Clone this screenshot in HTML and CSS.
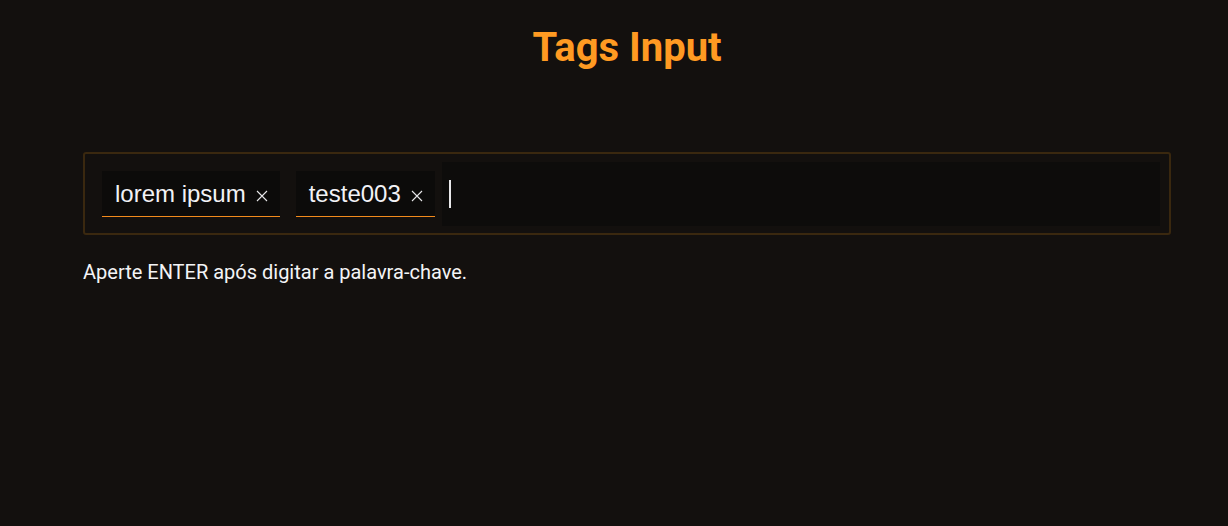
FILE: index.html
```html
<!DOCTYPE html>
<html lang="pt">
<head>
<meta charset="utf-8">
<title>Tags Input</title>
<link rel="stylesheet" href="styles.css">
</head>
<body>
<main class="wrap">
  <h1 class="title">Tags Input</h1>
  <div class="tags-box">
    <span class="tag">lorem ipsum<button class="tag-remove" aria-label="remover"><svg width="12" height="12" viewBox="0 0 12 12"><path d="M1 1L11 11M11 1L1 11" stroke="#e8e8ea" stroke-width="1.1" fill="none"/></svg></button></span>
    <span class="tag">teste003<button class="tag-remove" aria-label="remover"><svg width="12" height="12" viewBox="0 0 12 12"><path d="M1 1L11 11M11 1L1 11" stroke="#e8e8ea" stroke-width="1.1" fill="none"/></svg></button></span>
    <div class="tag-input"><span class="caret"></span></div>
  </div>
  <p class="hint">Aperte ENTER após digitar a palavra-chave.</p>
</main>
</body>
</html>
```
FILE: styles.css
```css
html, body {
  margin: 0;
  padding: 0;
  background: #13100e;
  height: 100%;
}
.wrap {
  width: 1088px;
  margin-left: 83px;
  padding-top: 24px;
  font-family: Roboto, "Liberation Sans", sans-serif;
}
.title {
  margin: 0 0 80px 0;
  text-align: center;
  font-family: Roboto, sans-serif;
  font-weight: 700;
  font-size: 40px;
  line-height: 48px;
  color: #ff9a22;
}
.tags-box {
  display: flex;
  align-items: center;
  border: 2px solid #3a280f;
  border-radius: 3px;
  padding: 8px 9px 7px 8px;
  height: 64px;
  box-sizing: content-box;
}
.tag {
  display: flex;
  align-items: center;
  box-sizing: border-box;
  height: 46px;
  margin-left: 9px;
  margin-right: 7px;
  padding: 0 12px 0 13px;
  background: #0c0b0a;
  border-bottom: 1px solid #f28a1c;
  font-family: "Liberation Sans", Arial, sans-serif;
  font-size: 24px;
  color: #f2f2f6;
}
.tag + .tag {
  margin-left: 9px;
}
.tag-remove {
  display: flex;
  align-items: center;
  background: none;
  border: 0;
  padding: 0;
  margin-left: 10px;
  margin-top: 4px;
  cursor: pointer;
}
.tag-input {
  flex: 1;
  align-self: stretch;
  background: #0d0c0b;
  display: flex;
  align-items: center;
  padding-left: 7px;
}
.caret {
  display: block;
  width: 2px;
  height: 28px;
  background: #e8e8ea;
}
.hint {
  margin: 25px 0 0 0;
  font-size: 20px;
  line-height: 24px;
  color: #f4f4f6;
}
```
